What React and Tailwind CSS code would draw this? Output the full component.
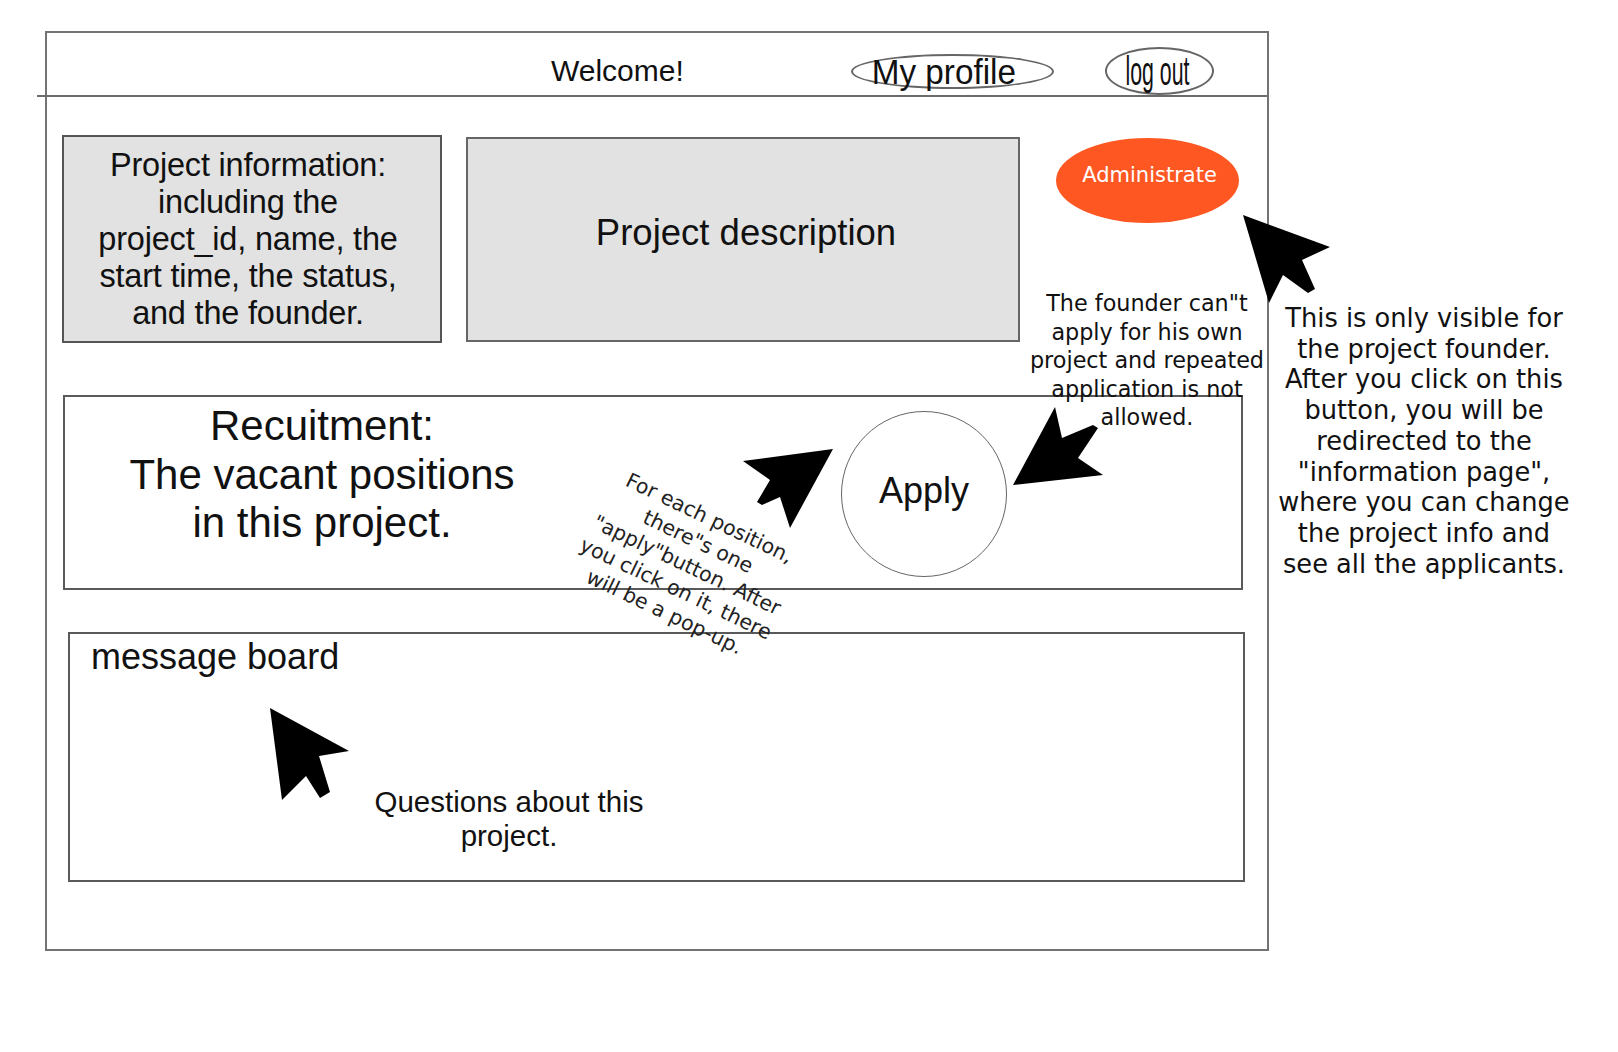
import React from "react";

function Arrows() {
  return (
    <svg
      className="absolute left-0 top-0 pointer-events-none"
      width="1618"
      height="1052"
      viewBox="0 0 1618 1052"
    >
      {/* pointer to Administrate */}
      <polygon
        points="1243,215 1269,303 1283,275 1308,293 1315,289 1302,260 1330,247"
        fill="#000"
      />
      {/* pointer left of Apply */}
      <polygon
        points="833,449 743,461 770,480 757,502 762,505 780,497 790,528"
        fill="#000"
      />
      {/* pointer right of Apply */}
      <polygon
        points="1013,485 1103,475 1078,458 1098,428 1093,425 1062,438 1055,407"
        fill="#000"
      />
      {/* pointer in message board */}
      <polygon
        points="270,708 282,800 306,776 320,798 330,792 319,756 349,751"
        fill="#000"
      />
    </svg>
  );
}

export default function App() {
  return (
    <div className="relative w-[1618px] h-[1052px] bg-white overflow-hidden font-['Liberation_Sans',Arial,sans-serif] text-[#111]">
      <div className="flex items-start pl-[45px] pt-[31px]">
        {/* Main wireframe frame */}
        <div className="w-[1224px] h-[920px] border-2 border-[#737373] flex flex-col shrink-0">
          {/* Header */}
          <div className="relative h-[64px] border-b-2 border-[#6b6b6b] flex items-center pt-[14px] pl-[504px]">
            <span className="absolute left-[-10px] bottom-[-2px] w-[10px] h-[2px] bg-[#6b6b6b]" />
            <span className="text-[30px] leading-none">Welcome!</span>
            <div className="ml-[167px] relative w-[203px] h-[35px] rounded-[50%] border-2 border-[#666] flex items-center justify-center pr-[16px]">
              <span className="text-[35px] leading-none scale-x-[0.95] whitespace-nowrap">My profile</span>
            </div>
            <div className="ml-[51px] relative w-[109px] h-[48px] rounded-[50%] border-2 border-[#666] flex items-center justify-center">
              <span className="text-[41px] leading-none scale-x-[0.52] whitespace-nowrap pr-[8px]">log out</span>
            </div>
          </div>

          {/* Row 1 */}
          <div className="flex items-start mt-[38px]">
            <div className="ml-[15px] w-[380px] h-[208px] border-2 border-[#555] bg-[#e2e2e2] flex items-center justify-center pr-[8px] text-center text-[32.5px] leading-[37px] tracking-[-0.2px]">
              <div className="whitespace-nowrap">
                Project information:
                <br />
                including the
                <br />
                project_id, name, the
                <br />
                start time, the status,
                <br />
                and the founder.
              </div>
            </div>
            <div className="ml-[24px] mt-[2px] w-[554px] h-[205px] border-2 border-[#666] bg-[#e2e2e2] flex justify-center pt-[74px] pl-[6px] text-[36.5px] leading-[40px]">
              Project description
            </div>
            <div className="ml-[36px] mt-[3px] w-[183px] h-[85px] rounded-[50%] bg-[#ff5722] flex items-center justify-center pb-[10px] pl-[4px] font-['DejaVu_Sans',sans-serif] text-[21px] text-white">
              Administrate
            </div>
          </div>

          {/* Row 2: Recruitment */}
          <div className="ml-[16px] mt-[52px] w-[1180px] h-[195px] border-2 border-[#5a5a5a] flex items-start">
            <div className="w-[514px] pt-[5px] text-center text-[42px] leading-[48.5px]">
              Recuitment:
              <br />
              The vacant positions
              <br />
              in this project.
            </div>
            <div className="ml-[262px] mt-[14px] w-[166px] h-[166px] rounded-full border-[1.5px] border-[#666] flex items-center justify-center pb-[6px] text-[36px]">
              Apply
            </div>
          </div>

          {/* Row 3: message board */}
          <div className="ml-[21px] mt-[42px] w-[1177px] h-[250px] border-2 border-[#5a5a5a] pl-[21px] pt-[3px]">
            <div className="text-[36px] leading-[40px]">message board</div>
            <div className="ml-[268px] mt-[108px] w-[300px] text-center text-[29.5px] leading-[34px]">
              Questions about this
              <br />
              project.
            </div>
          </div>
        </div>

        {/* Right annotation column */}
        <div className="w-[310px] pt-[272px] text-center font-['DejaVu_Sans',sans-serif] text-[25.7px] leading-[30.7px] text-[#111]">
          This is only visible for
          <br />
          the project founder.
          <br />
          After you click on this
          <br />
          button, you will be
          <br />
          redirected to the
          <br />
          {'"information page",'}
          <br />
          where you can change
          <br />
          the project info and
          <br />
          see all the applicants.
        </div>
      </div>

      {/* Founder annotation */}
      <div className="absolute left-[1007px] top-[289px] w-[280px] text-center font-['DejaVu_Sans',sans-serif] text-[22.3px] leading-[28.5px] text-[#111]">
        {'The founder can"t'}
        <br />
        apply for his own
        <br />
        project and repeated
        <br />
        application is not
        <br />
        allowed.
      </div>

      {/* Rotated annotation */}
      <div className="absolute left-[567px] top-[500px] w-[240px] h-[130px] rotate-[25.5deg] text-center font-['DejaVu_Sans',sans-serif] text-[20.5px] leading-[26px] text-[#222] whitespace-nowrap">
        For each position,
        <br />
        {'there"s one'}
        <br />
        {'"apply"button. After'}
        <br />
        you click on it, there
        <br />
        will be a pop-up.
      </div>

      <Arrows />
    </div>
  );
}
